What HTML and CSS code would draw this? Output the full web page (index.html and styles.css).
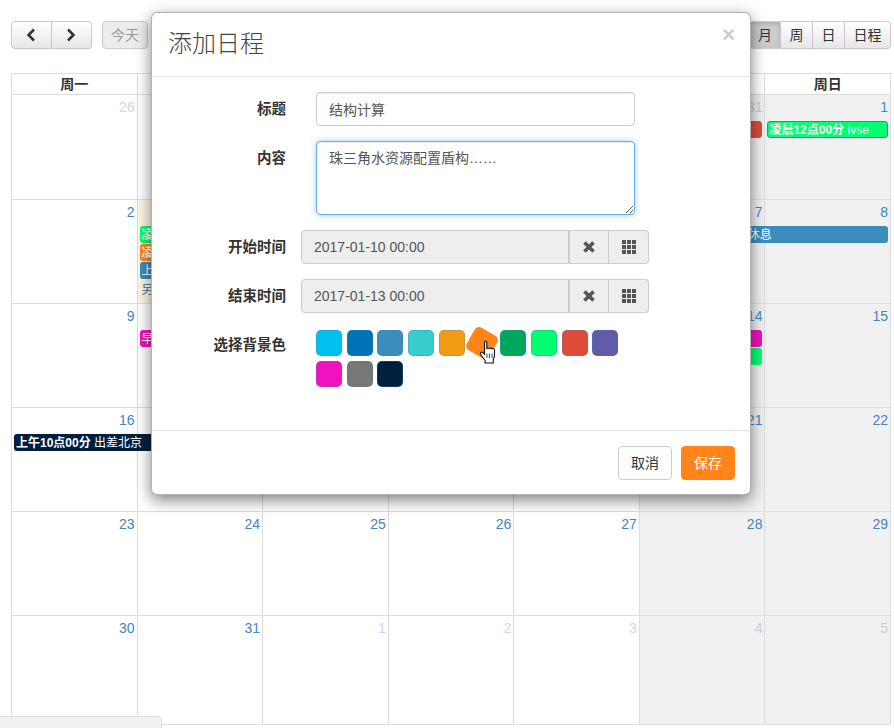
FILE: index.html
```html
<!DOCTYPE html>
<html lang="zh-CN">

<head>
    <meta charset="UTF-8">
    <title>添加日程</title>
    <link rel="stylesheet" href="styles.css">
</head>

<body>

    <!-- 工具栏 -->
    <div class="toolbar">
        <div class="btn-group">
            <button class="tb-btn nav-btn">
                <svg width="12" height="14" viewBox="0 0 12 14"><path d="M9 1.500 3.500 7 9 12.500" fill="none" stroke="#333" stroke-width="2.500"/></svg>
            </button>
            <button class="tb-btn nav-btn">
                <svg width="12" height="14" viewBox="0 0 12 14"><path d="M3 1.500 8.500 7 3 12.500" fill="none" stroke="#333" stroke-width="2.500"/></svg>
            </button>
        </div>
        <button class="tb-btn today-btn">今天</button>
        <div class="btn-group view-group">
            <button class="tb-btn view-btn active">月</button>
            <button class="tb-btn view-btn">周</button>
            <button class="tb-btn view-btn">日</button>
            <button class="tb-btn view-btn wide">日程</button>
        </div>
    </div>

    <!-- 月历：被弹窗盖住的日期不写数字 -->
    <div class="calendar">
        <div class="head-cell">周一</div>
        <div class="head-cell"></div>
        <div class="head-cell"></div>
        <div class="head-cell"></div>
        <div class="head-cell"></div>
        <div class="head-cell"></div>
        <div class="head-cell">周日</div>

        <div class="day other"><div class="num">26</div></div>
        <div class="day"></div>
        <div class="day"></div>
        <div class="day"></div>
        <div class="day"></div>
        <div class="day other weekend"><div class="num">31</div><div class="ev ev-red ev-edge"></div></div>
        <div class="day weekend"><div class="num">1</div><div class="ev ev-green ev-edge"><b>凌晨12点00分</b> lvse</div></div>

        <div class="day"><div class="num">2</div></div>
        <div class="day today">
            <div class="num"></div>
            <div class="ev ev-green"><b>凌</b></div>
            <div class="ev ev-orange"><b>凌</b></div>
            <div class="ev ev-blue">上</div>
            <div class="ev-more">另</div>
        </div>
        <div class="day"></div>
        <div class="day"></div>
        <div class="day"></div>
        <div class="day weekend"><div class="num">7</div><div class="ev ev-blue ev-rest">休息</div></div>
        <div class="day weekend"><div class="num">8</div></div>

        <div class="day"><div class="num">9</div></div>
        <div class="day"><div class="num"></div><div class="ev ev-pink">早</div></div>
        <div class="day"></div>
        <div class="day"></div>
        <div class="day"></div>
        <div class="day weekend"><div class="num">14</div><div class="ev ev-pink"></div><div class="ev ev-green"></div></div>
        <div class="day weekend"><div class="num">15</div></div>

        <div class="day"><div class="num">16</div><div class="ev ev-navy ev-over"><b>上午10点00分</b> 出差北京</div></div>
        <div class="day"></div>
        <div class="day"></div>
        <div class="day"></div>
        <div class="day"></div>
        <div class="day weekend"><div class="num">21</div></div>
        <div class="day weekend"><div class="num">22</div></div>

        <div class="day"><div class="num">23</div></div>
        <div class="day"><div class="num">24</div></div>
        <div class="day"><div class="num">25</div></div>
        <div class="day"><div class="num">26</div></div>
        <div class="day"><div class="num">27</div></div>
        <div class="day weekend"><div class="num">28</div></div>
        <div class="day weekend"><div class="num">29</div></div>

        <div class="day"><div class="num">30</div></div>
        <div class="day"><div class="num">31</div></div>
        <div class="day other"><div class="num">1</div></div>
        <div class="day other"><div class="num">2</div></div>
        <div class="day other"><div class="num">3</div></div>
        <div class="day other weekend"><div class="num">4</div></div>
        <div class="day other weekend"><div class="num">5</div></div>
    </div>

    <div class="corner-bar"></div>

    <!-- 添加日程弹窗 -->
    <div class="modal">
        <div class="modal-header">
            <h4>添加日程</h4>
            <span class="close">×</span>
        </div>
        <div class="modal-body">
            <div class="form-row">
                <label>标题</label>
                <input class="field" type="text" value="结构计算">
            </div>
            <div class="form-row">
                <label>内容</label>
                <textarea class="field area">珠三角水资源配置盾构……</textarea>
            </div>
            <div class="form-row">
                <label>开始时间</label>
                <div class="input-group">
                    <input class="time" type="text" value="2017-01-10 00:00" readonly>
                    <span class="addon">
                        <svg width="14" height="14" viewBox="0 0 14 14"><path d="M2.500 2.500 11.500 11.500M11.500 2.500 2.500 11.500" stroke="#555" stroke-width="3.600"/></svg>
                    </span>
                    <span class="addon">
                        <svg width="14" height="14" viewBox="0 0 14 14"><path d="M0 0h4v4H0zM5 0h4v4H5zM10 0h4v4h-4zM0 5h4v4H0zM5 5h4v4H5zM10 5h4v4h-4zM0 10h4v4H0zM5 10h4v4H5zM10 10h4v4h-4z" fill="#555"/></svg>
                    </span>
                </div>
            </div>
            <div class="form-row">
                <label>结束时间</label>
                <div class="input-group">
                    <input class="time" type="text" value="2017-01-13 00:00" readonly>
                    <span class="addon">
                        <svg width="14" height="14" viewBox="0 0 14 14"><path d="M2.500 2.500 11.500 11.500M11.500 2.500 2.500 11.500" stroke="#555" stroke-width="3.600"/></svg>
                    </span>
                    <span class="addon">
                        <svg width="14" height="14" viewBox="0 0 14 14"><path d="M0 0h4v4H0zM5 0h4v4H5zM10 0h4v4h-4zM0 5h4v4H0zM5 5h4v4H5zM10 5h4v4h-4zM0 10h4v4H0zM5 10h4v4H5zM10 10h4v4h-4z" fill="#555"/></svg>
                    </span>
                </div>
            </div>
            <div class="form-row color-row">
                <label>选择背景色</label>
                <div class="swatches">
                    <span class="swatch c1"></span>
                    <span class="swatch c2"></span>
                    <span class="swatch c3"></span>
                    <span class="swatch c4"></span>
                    <span class="swatch c5"></span>
                    <span class="swatch c6 hover"></span>
                    <span class="swatch c7"></span>
                    <span class="swatch c8"></span>
                    <span class="swatch c9"></span>
                    <span class="swatch c10"></span>
                    <span class="swatch c11"></span>
                    <span class="swatch c12"></span>
                    <span class="swatch c13"></span>
                    <!-- 鼠标手形 -->
                    <svg class="hand" width="17" height="24" viewBox="0 0 16 24"><path d="M5 2.200C5 .6 7.300 .6 7.300 2.200V9c.2-1.400 2.400-1.400 2.600 0 .2-1.200 2.400-1.200 2.600 .2.3-1 2.400-.9 2.500 .6V15c0 2-.7 3-1.200 4.500V23H5.600v-2.600C4 18.600 2.800 16.600 1.200 14.400 .2 12.900 1.900 11.300 3.300 12.600L5 14.200Z" fill="#fff" stroke="#111" stroke-width="1.100"/><path d="M7.400 13.500v4.500M9.900 13.500v4.500M12.500 13.500v4.500" stroke="#111" stroke-width=".8"/></svg>
                </div>
            </div>
        </div>
        <div class="modal-footer">
            <button class="btn">取消</button>
            <button class="btn btn-save">保存</button>
        </div>
    </div>

</body>

</html>
```

FILE: styles.css
```css
* {
    box-sizing: border-box;
}

html,
body {
    height: 100%;
}

body {
    margin: 0;
    padding: 21px 3px 0 11px;
    overflow: hidden;
    background: #fff;
    color: #333;
    font-family: "Liberation Sans", "Noto Sans CJK SC", sans-serif;
    font-size: 14px;
    line-height: 20px;
}

/* 工具栏 */
.toolbar {
    display: flex;
    height: 28px;
    margin-bottom: 24px;
}

.btn-group {
    display: flex;
}

.tb-btn {
    height: 28px;
    padding: 0;
    border: 1px solid #ccc;
    border-left-width: 0;
    background: linear-gradient(#fff, #e6e6e6);
    color: #333;
    font: inherit;
    line-height: 26px;
    box-shadow: inset 0 1px 0 rgba(255, 255, 255, .2), 0 1px 2px rgba(0, 0, 0, .05);
}

.btn-group .tb-btn:first-child {
    border-left-width: 1px;
    border-radius: 4px 0 0 4px;
}

.btn-group .tb-btn:last-child {
    border-radius: 0 4px 4px 0;
}

.nav-btn {
    display: flex;
    align-items: center;
    justify-content: center;
    width: 40.5px;
}

.today-btn {
    width: 46px;
    margin-left: 10px;
    border-left-width: 1px;
    border-radius: 4px;
    background: #ececec;
    color: #999;
    box-shadow: none;
}

.view-group {
    margin-left: auto;
}

.view-btn {
    width: 32px;
}

.view-btn.wide {
    width: 46px;
}

.view-btn.active {
    background: #ccc;
    box-shadow: inset 0 2px 4px rgba(0, 0, 0, .15);
}

/* 月历 */
.calendar {
    display: grid;
    grid-template-columns: repeat(7, 1fr);
    grid-template-rows: 21px 105px 104px 104px 104px 104px 109px;
    width: 880px;
    border-top: 1px solid #ddd;
    border-left: 1px solid #ddd;
}

.head-cell {
    border-right: 1px solid #ddd;
    border-bottom: 1px solid #ddd;
    font-weight: bold;
    text-align: center;
    line-height: 21px;
}

.day {
    min-width: 0;
    padding: 0 2px;
    border-right: 1px solid #ddd;
    border-bottom: 1px solid #ddd;
}

.weekend {
    background: #f1f1f1;
}

.today {
    background: #fcf8e3;
}

.num {
    height: 26px;
    color: #4285c4;
    text-align: right;
    line-height: 25px;
}

.other .num {
    opacity: .3;
}

.ev {
    height: 17px;
    margin-bottom: 1px;
    padding: 0 2px;
    overflow: hidden;
    border-radius: 3px;
    color: #fff;
    font-size: 12px;
    line-height: 18px;
    white-space: nowrap;
}

.ev-edge {
    border: 1px solid #3a87ad;
    padding: 0 1px;
    line-height: 16px;
}

.ev-red {
    background: #dd4b39;
}

.ev-green {
    background: #01ff70;
}

.ev-orange {
    background: #ff851b;
}

.ev-blue {
    background: #3c8dbc;
}

.ev-pink {
    background: #f012be;
}

.ev-navy {
    background: #001f3f;
}

/* 跨到周日的长条 */
.ev-rest {
    position: relative;
    z-index: 1;
    margin-right: -126px;
    padding-left: 106px;
}

.ev-over {
    margin-right: -30px;
}

.ev-more {
    padding-left: 2px;
    color: #3a6ea5;
    font-size: 12px;
    line-height: 20px;
}

.corner-bar {
    position: absolute;
    left: 0;
    bottom: 0;
    width: 162px;
    height: 12px;
    border-top: 1px solid #ddd;
    border-right: 1px solid #ddd;
    border-radius: 0 5px 0 0;
    background: #f1f1f1;
}

/* 弹窗 */
.modal {
    position: absolute;
    z-index: 2;
    top: 12px;
    left: 151px;
    width: 600px;
    border: 1px solid rgba(0, 0, 0, .3);
    border-radius: 6px;
    background: #fff;
    box-shadow: 0 5px 15px rgba(0, 0, 0, .5);
}

.modal-header {
    display: flex;
    justify-content: space-between;
    height: 64px;
    padding: 15px 15px 0 16px;
    border-bottom: 1px solid #e5e5e5;
}

.modal-header h4 {
    margin: 0;
    color: #444;
    font-size: 24px;
    font-weight: 300;
    line-height: 32px;
}

.close {
    color: #ccc;
    font-size: 22px;
    font-weight: bold;
    line-height: 14px;
}

.modal-body {
    height: 353px;
    padding-top: 15px;
}

.form-row {
    display: flex;
    margin-bottom: 15px;
}

.form-row label {
    flex: none;
    width: 134px;
    padding-top: 7px;
    font-size: 14.5px;
    font-weight: bold;
    text-align: right;
}

.field {
    display: block;
    width: 319px;
    height: 34px;
    margin-left: 30px;
    padding: 6px 12px;
    border: 1px solid #ccc;
    border-radius: 4px;
    color: #555;
    font: inherit;
    outline: none;
    box-shadow: inset 0 1px 1px rgba(0, 0, 0, .075);
}

.area {
    height: 74px;
    border-color: #66afe9;
    box-shadow: inset 0 1px 1px rgba(0, 0, 0, .075), 0 0 6px rgba(102, 175, 233, .6);
}

.input-group {
    display: flex;
    width: 348px;
    height: 34px;
    margin-left: 15px;
}

.time {
    flex: 1;
    min-width: 0;
    padding: 6px 12px;
    border: 1px solid #ccc;
    border-radius: 4px 0 0 4px;
    background: #eee;
    color: #555;
    font: inherit;
    outline: none;
}

.addon {
    display: flex;
    flex: none;
    align-items: center;
    justify-content: center;
    width: 40px;
    border: 1px solid #ccc;
    border-left-width: 0;
    background: #eee;
}

.addon:nth-child(2) {
    border-left-width: 1px;
}

.addon:last-child {
    border-radius: 0 4px 4px 0;
}

.color-row {
    margin-top: 17px;
}

.color-row label {
    padding-top: 5px;
}

.swatches {
    position: relative;
    display: flex;
    flex-wrap: wrap;
    gap: 5px 4.7px;
    width: 310px;
    margin-left: 30px;
}

.swatch {
    width: 26px;
    height: 26px;
    border: 1px solid rgba(58, 135, 173, .3);
    border-radius: 5px;
}

.swatch.hover {
    border: 0;
    transform: rotate(30deg);
}

.hand {
    position: absolute;
    top: 10px;
    left: 163px;
}

.c1 { background: #00c0ef; }
.c2 { background: #0073b7; }
.c3 { background: #3c8dbc; }
.c4 { background: #39cccc; }
.c5 { background: #f39c12; }
.c6 { background: #ff851b; }
.c7 { background: #00a65a; }
.c8 { background: #01ff70; }
.c9 { background: #dd4b39; }
.c10 { background: #605ca8; }
.c11 { background: #f012be; }
.c12 { background: #777; }
.c13 { background: #001f3f; }

.modal-footer {
    display: flex;
    justify-content: flex-end;
    gap: 9px;
    padding: 15px 15px 14px;
    border-top: 1px solid #e5e5e5;
}

.btn {
    width: 54px;
    height: 34px;
    padding: 0;
    border: 1px solid #ccc;
    border-radius: 4px;
    background: #fff;
    color: #333;
    font: inherit;
}

.btn-save {
    border-color: #ff851b;
    background: #ff851b;
    color: #fff;
}
```
